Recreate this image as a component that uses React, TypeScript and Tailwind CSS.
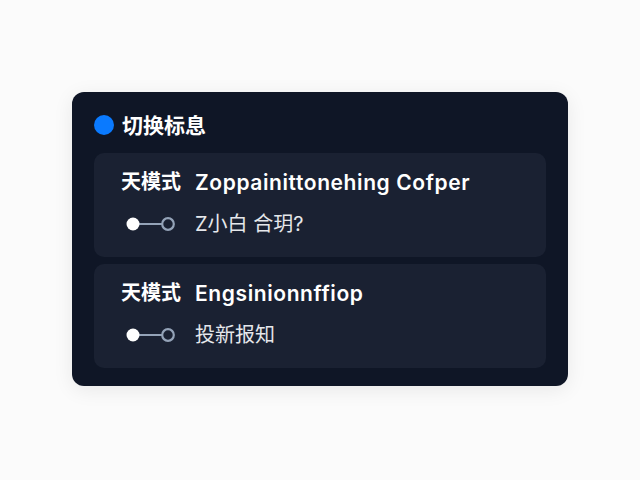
import React from "react";

function Toggle() {
  return (
    <svg width="52" height="16" viewBox="0 0 52 16" className="shrink-0">
      <line x1="8" y1="8" x2="36" y2="8" stroke="#94a3b8" strokeWidth="2" />
      <circle cx="7" cy="8" r="6.5" fill="#ffffff" />
      <circle cx="42" cy="8" r="5.8" fill="none" stroke="#94a3b8" strokeWidth="2.2" />
    </svg>
  );
}

function Row({ title, sub }: { title: string; sub: string }) {
  return (
    <div className="rounded-[10px] bg-[#1a2132] pl-[27px] pt-[16px] pb-[20px]">
      <div className="flex items-center h-[26px] text-white leading-none">
        <span className="font-bold text-[20px]">天模式</span>
        <span className="ml-[14px] text-[21px] font-semibold tracking-[0.6px]">{title}</span>
      </div>
      <div className="flex items-center mt-[16px] h-[26px]">
        <div className="ml-[5px]"><Toggle /></div>
        <span className="ml-[17px] text-[20px] text-[#e5e7eb] leading-none">{sub}</span>
      </div>
    </div>
  );
}

export default function App() {
  return (
    <div
      className="w-[640px] h-[480px] bg-[#fbfbfb] flex pt-[92px] pl-[72px]"
      style={{ fontFamily: 'Inter, "Noto Sans CJK SC", sans-serif' }}
    >
      <div className="w-[496px] h-[294px] rounded-[12px] bg-[#0f1626] px-[22px] pt-[21px] shadow-[0_4px_20px_rgba(0,0,0,0.08)]">
        <div className="flex items-center h-[24px] mb-[16px]">
          <span className="w-[20px] h-[20px] rounded-full bg-[#0a7aff]" />
          <span className="ml-[8px] text-[21px] font-bold text-white leading-none">切换标息</span>
        </div>
        <div className="flex flex-col gap-[7px]">
          <Row title="Zoppainittonehing Cofper" sub="Z小白 合玥?" />
          <Row title="Engsinionnffiop" sub="投新报知" />
        </div>
      </div>
    </div>
  );
}
